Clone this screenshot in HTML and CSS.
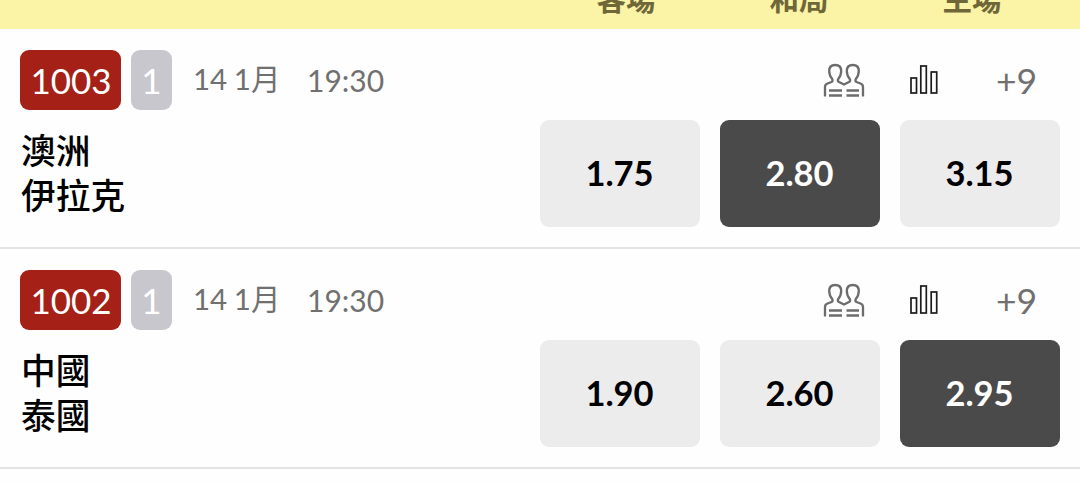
FILE: index.html
```html
<!DOCTYPE html>
<html lang="zh-Hant">
    <head>
        <meta charset="UTF-8">
        <meta name="viewport" content="width=device-width, initial-scale=1.0">
        <title>賽事賠率</title>
        <link rel="stylesheet" href="styles.css">
    </head>
    <body>
        <svg class="symbols">
            <symbol id="icon-teams" viewBox="0 0 42 36">
                <g fill="none" stroke="#6c6c6c" stroke-width="2.300">
                    <path d="M2 33.500V24Q2 21.500 4.500 20.500L8.500 19Q10.200 18 9.200 16Q6.200 12.500 6.200 8Q6.200 2 12.200 2Q18.200 2 18.200 8Q18.200 12.500 15.200 16Q14.200 18 16 19L21 21.500L26 19Q27.800 18 26.800 16Q23.800 12.500 23.800 8Q23.800 2 29.800 2Q35.800 2 35.800 8Q35.800 12.500 32.800 16Q31.800 18 33.500 19L37.500 20.500Q40 21.500 40 24V33.500"/>
                    <path d="M6 27.500H19M6 32.500H19M23.500 27.500H36M23.500 32.500H36" stroke-width="2.500"/>
                </g>
            </symbol>
            <symbol id="icon-stats" viewBox="0 0 28 29">
                <g fill="none" stroke="#1c1c1c" stroke-width="1.700">
                    <rect x="1" y="13" width="5.500" height="15"/>
                    <rect x="10.800" y="1" width="5.500" height="27"/>
                    <rect x="21.200" y="7" width="5.500" height="21"/>
                </g>
            </symbol>
        </svg>

        <div class="header">
            <div class="columns">
                <span>客場</span>
                <span>和局</span>
                <span>主場</span>
            </div>
        </div>

        <div class="match">
            <div class="info">
                <div class="meta">
                    <span class="code">1003</span>
                    <span class="leg">1</span>
                    <span class="date">14 1月</span>
                    <span class="time">19:30</span>
                </div>
                <div class="teams">
                    <p>澳洲</p>
                    <p>伊拉克</p>
                </div>
            </div>
            <div class="market">
                <div class="tools">
                    <svg class="teams-icon"><use href="#icon-teams"/></svg>
                    <svg class="stats-icon"><use href="#icon-stats"/></svg>
                    <span class="more">+9</span>
                </div>
                <div class="odds">
                    <div class="odd">1.75</div>
                    <div class="odd selected">2.80</div>
                    <div class="odd">3.15</div>
                </div>
            </div>
        </div>

        <div class="match">
            <div class="info">
                <div class="meta">
                    <span class="code">1002</span>
                    <span class="leg">1</span>
                    <span class="date">14 1月</span>
                    <span class="time">19:30</span>
                </div>
                <div class="teams">
                    <p>中國</p>
                    <p>泰國</p>
                </div>
            </div>
            <div class="market">
                <div class="tools">
                    <svg class="teams-icon"><use href="#icon-teams"/></svg>
                    <svg class="stats-icon"><use href="#icon-stats"/></svg>
                    <span class="more">+9</span>
                </div>
                <div class="odds">
                    <div class="odd">1.90</div>
                    <div class="odd">2.60</div>
                    <div class="odd selected">2.95</div>
                </div>
            </div>
        </div>
    </body>
</html>
```
FILE: styles.css
```css
* {
    margin: 0;
    padding: 0;
    box-sizing: border-box;
}

body {
    font-family: Lato, 'Noto Sans CJK TC', sans-serif;
    background: #fefefe;
    height: 484px;
    overflow: hidden;
}

.symbols {
    display: none;
}

/* Column titles, scrolled partly out of view */
.header {
    display: flex;
    align-items: flex-end;
    justify-content: flex-end;
    height: 29px;
    padding: 0 20px 13px;
    background: #fbf3a6;
}

.columns {
    display: grid;
    grid-template-columns: repeat(3, 160px);
    column-gap: 13px;
    width: 520px;
    padding-left: 6px;
    color: #6f6738;
    font-size: 29.5px;
    font-weight: 700;
    line-height: 34px;
    text-align: center;
}

.match {
    display: flex;
    justify-content: space-between;
    height: 220px;
    padding: 20px 20px 0;
    border-bottom: 2px solid #e4e4e4;
}

.meta {
    display: flex;
    align-items: center;
    height: 61px;
    color: #707070;
}

.code,
.leg {
    height: 60px;
    border-radius: 9px;
    color: #fff;
    font-size: 35px;
    line-height: 61px;
    text-align: center;
}

.code {
    width: 101px;
    padding-left: 1px;
    background: #a52117;
}

.leg {
    width: 41px;
    margin-left: 10px;
    background: #c8c7ce;
}

.date {
    width: 135px;
    padding: 0 0 5px 21px;
    font-size: 29.5px;
    word-spacing: -1px;
    white-space: nowrap;
}

.time {
    font-size: 30px;
}

.teams {
    padding: 18px 0 0 1px;
    color: #000;
    font-size: 34.7px;
    font-weight: 500;
    line-height: 45px;
}

.market {
    width: 520px;
}

.tools {
    display: flex;
    align-items: center;
    height: 61px;
    margin-bottom: 10px;
    padding: 2px 0 0 283px;
    color: #707070;
}

.teams-icon {
    width: 42px;
    height: 36px;
}

.stats-icon {
    width: 28px;
    height: 29px;
    margin: 0 58px 3px 45px;
}

.more {
    font-size: 35.5px;
}

.odds {
    display: grid;
    grid-template-columns: repeat(3, 1fr);
    gap: 20px;
}

.odd {
    height: 107px;
    padding-right: 1px;
    border-radius: 9px;
    background: #ececec;
    color: #000;
    font-size: 34.5px;
    font-weight: 700;
    line-height: 105px;
    text-align: center;
}

.selected {
    background: #4a4a4a;
    color: #fff;
}
```
